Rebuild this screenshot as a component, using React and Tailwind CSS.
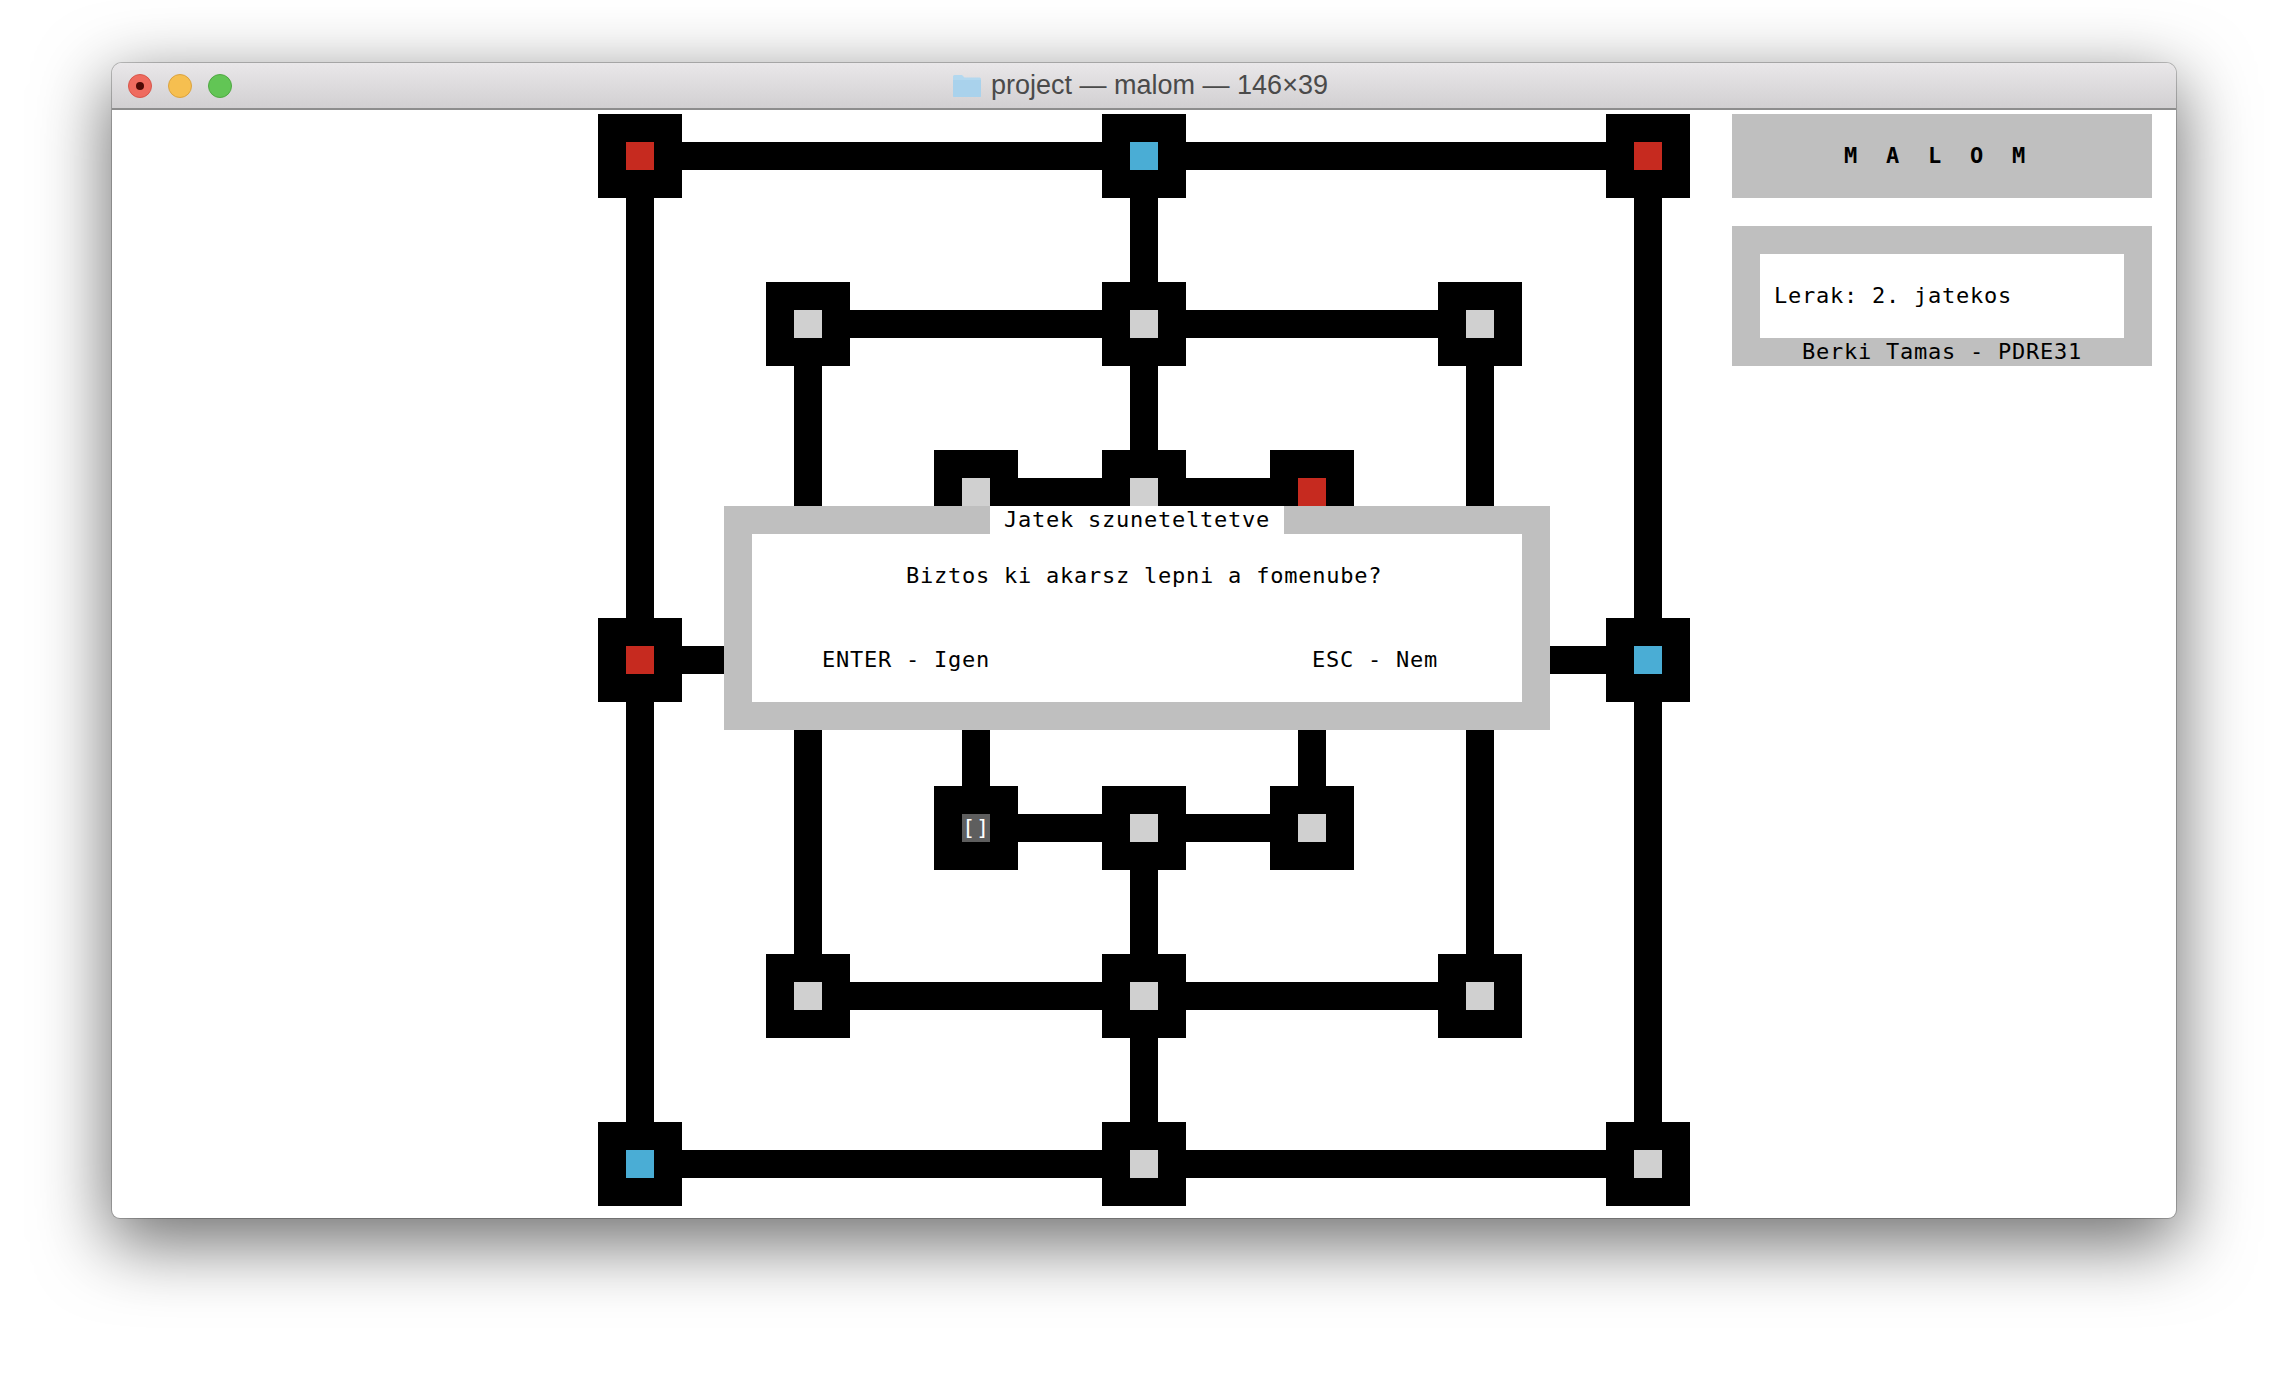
import React from 'react';

// board is 39x39 units, one unit = 2 terminal cells (28x28 px)
const hLines = [
    [1, 1, 37], [37, 1, 37], [7, 7, 31], [31, 7, 31],
    [13, 13, 25], [25, 13, 25], [19, 1, 13], [19, 25, 37],
];
const vLines = [
    [1, 1, 37], [37, 1, 37], [7, 7, 31], [31, 7, 31],
    [13, 13, 25], [25, 13, 25], [19, 1, 13], [19, 25, 37],
];

// [col, row, state]
const nodes = [
    [0, 0, 'red'], [18, 0, 'blue'], [36, 0, 'red'],
    [6, 6, 'empty'], [18, 6, 'empty'], [30, 6, 'empty'],
    [12, 12, 'empty'], [18, 12, 'empty'], [24, 12, 'red'],
    [0, 18, 'red'], [6, 18, 'empty'], [12, 18, 'empty'],
    [24, 18, 'empty'], [30, 18, 'empty'], [36, 18, 'blue'],
    [12, 24, 'cursor'], [18, 24, 'empty'], [24, 24, 'empty'],
    [6, 30, 'empty'], [18, 30, 'empty'], [30, 30, 'empty'],
    [0, 36, 'blue'], [18, 36, 'empty'], [36, 36, 'empty'],
];

const pieceColor = {
    red: 'bg-[#c62a1f]',
    blue: 'bg-[#4aadd5]',
    empty: 'bg-[#d0d0d0]',
    cursor: 'bg-[#5e5e5e] text-white',
};

const FolderIcon = () => (
    <svg width="30" height="24" viewBox="0 0 30 24">
        <path d="M1 2.5 Q1 1 2.5 1 H10 L12.5 3.5 H27.5 Q29 3.5 29 5 V22 Q29 23 28 23 H2 Q1 23 1 22 Z" fill="#b3d8ef" />
        <path d="M1 6 H29 V22 Q29 23 28 23 H2 Q1 23 1 22 Z" fill="#a9d2ec" />
    </svg>
);

const TitleBar = () => (
    <div className="relative h-[47px] shrink-0 bg-gradient-to-b from-[#e9e7e9] to-[#d2d0d2] border-b-2 border-[#8d8d8d] flex items-center justify-center">
        <div className="absolute left-[16px] top-[11px] flex gap-[16px]">
            <div className="w-[24px] h-[24px] rounded-full bg-[#ef6b5f] border border-[#d8564b] flex items-center justify-center">
                <div className="w-[8px] h-[8px] rounded-full bg-[#4d0a06]" />
            </div>
            <div className="w-[24px] h-[24px] rounded-full bg-[#f6bf50] border border-[#dba33f]" />
            <div className="w-[24px] h-[24px] rounded-full bg-[#62c555] border border-[#4fa842]" />
        </div>
        <div className="flex items-center gap-[9px] mr-[8px]">
            <FolderIcon />
            <span className="font-['Liberation_Sans',Arial,sans-serif] text-[27px] text-[#4a4a4a]">project — malom — 146×39</span>
        </div>
    </div>
);

const Board = () => (
    <div className="relative ml-[476px] grid grid-cols-[repeat(39,28px)] grid-rows-[repeat(39,28px)]">
        {hLines.map(([r, c1, c2], i) => (
            <div key={'h' + i} className="bg-black" style={{ gridRow: `${r + 1}`, gridColumn: `${c1 + 1} / ${c2 + 2}` }} />
        ))}
        {vLines.map(([c, r1, r2], i) => (
            <div key={'v' + i} className="bg-black" style={{ gridColumn: `${c + 1}`, gridRow: `${r1 + 1} / ${r2 + 2}` }} />
        ))}
        {nodes.map(([c, r, state]) => (
            <div
                key={c + '-' + r}
                className="bg-black flex items-center justify-center"
                style={{ gridColumn: `${c + 1} / span 3`, gridRow: `${r + 1} / span 3` }}
            >
                <div className={`w-[28px] h-[28px] ${pieceColor[state]}`}>
                    {state === 'cursor' ? '[]' : null}
                </div>
            </div>
        ))}

        {/* Pause dialog */}
        <div className="absolute left-[126px] top-[392px] w-[826px] h-[224px] bg-[#bfbfbf] p-[28px]">
            <div className="absolute left-[266px] top-0 h-[28px] bg-white"> Jatek szuneteltetve </div>
            <div className="h-full bg-white">
                <div className="h-[28px]" />
                <div className="h-[28px] pl-[154px]">Biztos ki akarsz lepni a fomenube?</div>
                <div className="h-[56px]" />
                <div className="h-[28px] flex">
                    <span className="w-[560px] pl-[70px]">ENTER - Igen</span>
                    <span>ESC - Nem</span>
                </div>
            </div>
        </div>
    </div>
);

const SidePanel = () => (
    <div className="w-[420px] ml-[42px]">
        <div className="h-[84px] bg-[#bfbfbf] pt-[28px] pl-[112px] font-bold">M  A  L  O  M</div>
        <div className="mt-[28px] h-[140px] bg-[#bfbfbf] pt-[28px] px-[28px]">
            <div className="h-[84px] bg-white pt-[28px] pl-[14px]">Lerak: 2. jatekos</div>
            <div className="h-[28px] pl-[42px]">Berki Tamas - PDRE31</div>
        </div>
    </div>
);

const App = () => {
    return (
        <div className="w-[2288px] h-[1378px] bg-white overflow-hidden pt-[63px] pl-[112px]">
            <div className="w-[2064px] h-[1155px] rounded-t-[10px] rounded-b-[8px] bg-white overflow-hidden flex flex-col shadow-[0_0_0_1px_rgba(0,0,0,0.22),0_22px_70px_4px_rgba(0,0,0,0.56)]">
                <TitleBar />
                <div className="flex-1 flex items-start pt-[4px] pl-[10px] font-['DejaVu_Sans_Mono',monospace] text-[22px] leading-[28px] tracking-[0.76px] text-black whitespace-pre">
                    <Board />
                    <SidePanel />
                </div>
            </div>
        </div>
    );
};

export default App;
